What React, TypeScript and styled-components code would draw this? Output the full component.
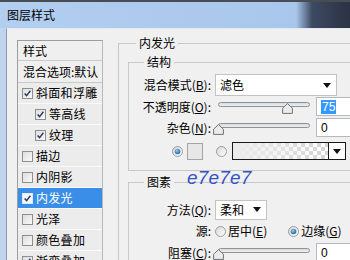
import React from "react";
import styled, { createGlobalStyle } from "styled-components";

const Global = createGlobalStyle`
  html, body { margin: 0; padding: 0; background: #f0f0f0; }
  body {
    width: 350px; height: 260px; overflow: hidden;
    font-family: "Noto Sans CJK SC", "Noto Sans", sans-serif;
  }
  * { box-sizing: border-box; }
`;

const Window = styled.div`
  position: relative;
  width: 350px;
  height: 260px;
  overflow: hidden;
  display: flex;
  flex-direction: column;
  background: #bfd5ee;
  border-top: 2px solid #474d52;
`;

const TitleBar = styled.div`
  flex: none;
  height: 26px;
  display: flex;
  align-items: center;
  padding-left: 7px;
  background: linear-gradient(to right, #b2cef0 0, #a9c7ec 296px, #3d4a62 312px, #2a3243 100%);
  font-size: 12px;
  line-height: 14px;
  color: #000;
`;

const Client = styled.div`
  flex: 1;
  display: flex;
  align-items: flex-start;
  margin-left: 6px;
  padding-left: 10px;
  background: #f0f0f0;
  border-left: 1px solid #8c9aab;
  border-top: 1px solid #e4e9ef;
  font-size: 12px;
  color: #000;
`;

const ListBox = styled.div`
  flex: none;
  width: 86px;
  height: 240px;
  margin-top: 11px;
  background: #ececec;
  border: 1px solid #9d9d9d;
  border-right-color: #b8b8b8;
  display: flex;
  flex-direction: column;
`;

const ListHeader = styled.div<{ $h: number }>`
  height: ${(p) => p.$h}px;
  flex: none;
  display: flex;
  align-items: center;
  padding-left: 5px;
  font-size: 12px;
  line-height: 14px;
  white-space: nowrap;
  overflow: hidden;
  border-bottom: 1px solid #c9c9c9;
  background: #efefef;
`;

const ListItem = styled.div<{ $indent: boolean; $selected: boolean }>`
  height: 21px;
  flex: none;
  display: flex;
  align-items: center;
  gap: 3px;
  padding-left: ${(p) => (p.$indent ? 17 : 4)}px;
  font-size: 12px;
  line-height: 14px;
  letter-spacing: 0.3px;
  white-space: nowrap;
  border-bottom: 1px solid #fafafa;
  background: ${(p) => (p.$selected ? "#3a8ee8" : "transparent")};
  color: ${(p) => (p.$selected ? "#fff" : "#000")};
`;

const RightCol = styled.div`
  flex: none;
  width: 250px;
  margin-left: 15px;
  margin-top: 6px;
`;

const Group = styled.fieldset<{ $mt: number; $pt: number; $pb: number }>`
  margin: ${(p) => p.$mt}px 0 0 0;
  padding: ${(p) => p.$pt}px 0 ${(p) => p.$pb}px 9px;
  border: 1px solid #c8c8c8;
  border-right: none;
  min-width: 0;
`;

const OuterGroup = styled(Group)`
  border-bottom: none;
  height: 240px;
`;

const Legend = styled.legend<{ $ml: number }>`
  margin-left: ${(p) => p.$ml}px;
  padding: 0 3px;
  font-size: 12px;
  line-height: 16px;
`;

const Row = styled.div<{ $h: number; $mt?: number }>`
  display: flex;
  align-items: center;
  height: ${(p) => p.$h}px;
  margin-top: ${(p) => p.$mt ?? 0}px;
  white-space: nowrap;
`;

const Label = styled.div`
  flex: none;
  width: 73px;
  margin-right: 4px;
  text-align: right;
  font-size: 12px;
  line-height: 14px;
`;

const U = styled.span`
  text-decoration: underline;
  text-underline-offset: 1px;
`;

const Select = styled.div<{ $w: number; $h: number }>`
  flex: none;
  width: ${(p) => p.$w}px;
  height: ${(p) => p.$h}px;
  display: flex;
  align-items: center;
  justify-content: space-between;
  padding: 0 5px 0 4px;
  background: #fff;
  border: 1px solid #c3c3c3;
  font-size: 12px;
  line-height: 14px;
`;

const Arrow = styled.span`
  width: 0;
  height: 0;
  border-left: 4px solid transparent;
  border-right: 4px solid transparent;
  border-top: 5px solid #111;
`;

const SliderBox = styled.div`
  position: relative;
  flex: none;
  width: 96px;
  height: 21px;
  padding-top: 6px;
  padding-left: 3px;
`;

const Track = styled.div`
  width: 92px;
  height: 5px;
  border-radius: 3px;
  border: 1px solid #8f9294;
  background: linear-gradient(#d6d9db, #eef0f1);
`;

const Thumb = styled.svg`
  position: absolute;
  top: 7px;
`;

const NumInput = styled.div`
  flex: none;
  width: 40px;
  height: 19px;
  margin-left: 5px;
  padding-left: 4px;
  display: flex;
  align-items: center;
  background: #fff;
  border: 1px solid #b5b8bd;
  font-family: "Liberation Sans", Arial, sans-serif;
  font-size: 12px;
`;

const Selected = styled.span`
  background: #3399ff;
  color: #fff;
  padding: 0 1px;
  line-height: 14px;
`;

const ColorRow = styled(Row)`
  padding-left: 34px;
`;

const Swatch = styled.div`
  flex: none;
  width: 16px;
  height: 17px;
  margin: 0 13px 0 4px;
  background: #e7e7e7;
  border: 1px solid #a5a5a5;
`;

const GradientPicker = styled.div`
  flex: none;
  width: 114px;
  height: 18px;
  margin-left: 5px;
  display: flex;
  border: 1px solid #1a1a1a;
  background-color: #fff;
`;

const GradientFill = styled.div`
  flex: 1;
  background:
    linear-gradient(to right, #ececec 0%, rgba(236, 236, 236, 0.6) 45%, rgba(236, 236, 236, 0) 100%),
    repeating-conic-gradient(#d4d4d4 0 25%, #ffffff 0 50%) 0 0 / 8px 8px;
`;

const GradientArrow = styled.div`
  flex: none;
  width: 17px;
  display: flex;
  align-items: center;
  justify-content: center;
  border-left: 1px solid #1a1a1a;
  background: #fff;
`;

const RadioText = styled.span<{ $ml: number }>`
  margin-left: ${(p) => p.$ml}px;
  font-size: 12px;
  line-height: 14px;
`;

const Annotation = styled.div`
  position: absolute;
  left: 187px;
  top: 166px;
  font-family: "Liberation Sans", Arial, sans-serif;
  font-style: italic;
  font-size: 19px;
  line-height: 20px;
  color: #3553c4;
  letter-spacing: 0.2px;
`;

function Check({ on, inverse }: { on: boolean; inverse?: boolean }) {
  return (
    <svg width="11" height="11" viewBox="0 0 11 11" style={{ flex: "none" }}>
      <defs>
        <linearGradient id="cbg" x1="0" y1="0" x2="1" y2="1">
          <stop offset="0" stopColor="#dcdcdc" />
          <stop offset="1" stopColor="#fbfbfb" />
        </linearGradient>
      </defs>
      <rect x="0.5" y="0.5" width="10" height="10" fill={inverse ? "#f4f7fb" : "url(#cbg)"} stroke={inverse ? "#dfe9f7" : "#8e8f8f"} />
      {on && <path d="M2.6 5.4 L4.6 7.6 L8.4 2.8" fill="none" stroke="#2c3b63" strokeWidth="1.5" />}
    </svg>
  );
}

function Radio({ on }: { on: boolean }) {
  return (
    <svg width="11" height="11" viewBox="0 0 11 11" style={{ flex: "none" }}>
      <defs>
        <linearGradient id="rbg" x1="0" y1="0" x2="1" y2="1">
          <stop offset="0" stopColor="#d6d6d6" />
          <stop offset="1" stopColor="#ffffff" />
        </linearGradient>
        <radialGradient id="rdot" cx="0.4" cy="0.35" r="0.7">
          <stop offset="0" stopColor="#8fd0f6" />
          <stop offset="1" stopColor="#1c5a96" />
        </radialGradient>
      </defs>
      <circle cx="5.5" cy="5.5" r="5" fill="url(#rbg)" stroke="#9a9c9e" />
      {on && <circle cx="5.5" cy="5.5" r="2.8" fill="url(#rdot)" />}
    </svg>
  );
}

function Slider({ value }: { value: number }) {
  const left = 3 + (92 * value) / 100 - 5.5;
  return (
    <SliderBox>
      <Track />
      <Thumb width="11" height="11" viewBox="0 0 11 11" style={{ left: `${left}px` }}>
        <path d="M5.5 0.6 L10.4 5.2 L10.4 10.4 L0.6 10.4 L0.6 5.2 Z" fill="#ebebeb" stroke="#6f7274" strokeWidth="1" />
      </Thumb>
    </SliderBox>
  );
}

const items: { label: string; checked: boolean; indent?: boolean; selected?: boolean }[] = [
  { label: "斜面和浮雕", checked: true },
  { label: "等高线", checked: true, indent: true },
  { label: "纹理", checked: true, indent: true },
  { label: "描边", checked: false },
  { label: "内阴影", checked: false },
  { label: "内发光", checked: true, selected: true },
  { label: "光泽", checked: false },
  { label: "颜色叠加", checked: false },
  { label: "渐变叠加", checked: true },
];

export default function App() {
  return (
    <>
      <Global />
      <Window>
        <TitleBar>图层样式</TitleBar>
        <Client>
          <ListBox>
            <ListHeader $h={20}>样式</ListHeader>
            <ListHeader $h={22}>混合选项:默认</ListHeader>
            {items.map((it) => (
              <ListItem key={it.label} $indent={!!it.indent} $selected={!!it.selected}>
                <Check on={it.checked} inverse={it.selected} />
                {it.label}
              </ListItem>
            ))}
          </ListBox>
          <RightCol>
            <OuterGroup $mt={0} $pt={0} $pb={0}>
              <Legend $ml={8}>内发光</Legend>
              <Group $mt={3} $pt={4} $pb={9}>
                <Legend $ml={6}>结构</Legend>
                <Row $h={22}>
                  <Label>混合模式(<U>B</U>):</Label>
                  <Select $w={122} $h={22}>
                    滤色
                    <Arrow />
                  </Select>
                </Row>
                <Row $h={21}>
                  <Label>不透明度(<U>O</U>):</Label>
                  <Slider value={75} />
                  <NumInput>
                    <Selected>75</Selected>
                  </NumInput>
                </Row>
                <Row $h={21}>
                  <Label>杂色(<U>N</U>):</Label>
                  <Slider value={0} />
                  <NumInput>0</NumInput>
                </Row>
                <ColorRow $h={20} $mt={3}>
                  <Radio on={true} />
                  <Swatch />
                  <Radio on={false} />
                  <GradientPicker>
                    <GradientFill />
                    <GradientArrow>
                      <Arrow />
                    </GradientArrow>
                  </GradientPicker>
                </ColorRow>
              </Group>
              <Group $mt={3} $pt={9} $pb={0}>
                <Legend $ml={6}>图素</Legend>
                <Row $h={21}>
                  <Label>方法(<U>Q</U>):</Label>
                  <Select $w={52} $h={20}>
                    柔和
                    <Arrow />
                  </Select>
                </Row>
                <Row $h={22}>
                  <Label>源:</Label>
                  <Radio on={false} />
                  <RadioText $ml={2}>居中(<U>E</U>)</RadioText>
                  <span style={{ width: 21 }} />
                  <Radio on={true} />
                  <RadioText $ml={2}>边缘(<U>G</U>)</RadioText>
                </Row>
                <Row $h={21}>
                  <Label>阻塞(<U>C</U>):</Label>
                  <Slider value={0} />
                  <NumInput>0</NumInput>
                </Row>
              </Group>
            </OuterGroup>
          </RightCol>
        </Client>
        <Annotation>e7e7e7</Annotation>
      </Window>
    </>
  );
}
